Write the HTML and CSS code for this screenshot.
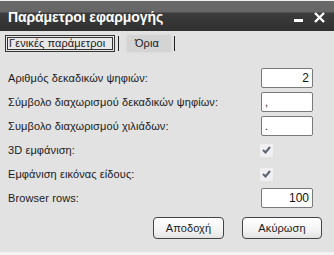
FILE: index.html
```html
<!DOCTYPE html>
<html lang="el">

<head>
	<meta charset="UTF-8">
	<title>Παράμετροι εφαρμογής</title>
	<link rel="stylesheet" href="styles.css">
</head>

<body>
	<div class="window">
		<div class="titlebar">
			<span class="title">Παράμετροι εφαρμογής</span>
			<span class="controls">
				<span class="min"></span>
				<svg class="close" width="11" height="11" viewBox="0 0 11 11">
					<path d="M1 1 L10 10 M10 1 L1 10" stroke="#fff" stroke-width="2.4" />
				</svg>
			</span>
		</div>

		<div class="tabs">
			<span class="tab active">Γενικές παράμετροι</span>
			<span class="sep"></span>
			<span class="tab">Όρια</span>
			<span class="sep"></span>
		</div>

		<form class="settings">
			<label>Αριθμός δεκαδικών ψηφιών:</label>
			<input type="text" class="num" value="2">

			<label>Σύμβολο διαχωρισμού δεκαδικών ψηφίων:</label>
			<input type="text" value=",">

			<label>Συμβολο διαχωρισμού χιλιάδων:</label>
			<input type="text" value=".">

			<label>3D εμφάνιση:</label>
			<span class="check">
				<svg width="9" height="8" viewBox="0 0 9 8"><path d="M1 4 L3.5 6.5 L8 1" stroke="#5b6270" stroke-width="2" fill="none" /></svg>
			</span>

			<label>Εμφάνιση εικόνας είδους:</label>
			<span class="check">
				<svg width="9" height="8" viewBox="0 0 9 8"><path d="M1 4 L3.5 6.5 L8 1" stroke="#5b6270" stroke-width="2" fill="none" /></svg>
			</span>

			<label>Browser rows:</label>
			<input type="text" class="num" value="100">
		</form>

		<div class="buttons">
			<button type="button" class="ok-btn">Αποδοχή</button>
			<button type="button" class="cancel-btn">Ακύρωση</button>
		</div>
	</div>
</body>

</html>
```

FILE: styles.css
```css
* {
	box-sizing: border-box;
}

body {
	margin: 0;
	font-family: 'Liberation Sans', Arial, sans-serif;
	background-color: #f4f4f4;
}

.window {
	width: 334px;
	height: 252px;
	background-color: #e2e2e2;
	display: flex;
	flex-direction: column;
}

.titlebar {
	height: 31px;
	border-top: 1px solid #f0f0f0;
	background: linear-gradient(to bottom, #6a6a6a 0, #666 11px, #3c3c3c 12px, #303030 100%);
	display: flex;
	align-items: center;
	justify-content: space-between;
	padding: 2px 9px 0 8px;
}

.title {
	color: #fff;
	font-weight: bold;
	font-size: 14px;
	letter-spacing: -0.1px;
}

.controls {
	display: flex;
	align-items: center;
	gap: 11px;
}

.min {
	width: 9px;
	height: 3px;
	background-color: #fff;
	margin-top: 7px;
}

.tabs {
	display: flex;
	align-items: center;
	padding: 3px 0 0 5px;
	height: 21px;
}

.tab {
	font-size: 11px;
	letter-spacing: 0.1px;
	color: #1a1a1a;
	height: 17px;
	white-space: nowrap;
}

.tab.active {
	border: 3px double #333;
	background-color: #e8e8e8;
	line-height: 11px;
	padding: 0 1px;
	width: 110px;
}

.tab:not(.active) {
	background-color: #d4d4d4;
	margin-left: 8px;
	line-height: 17px;
	padding: 0 12px 0 8px;
	box-shadow: 0 0 3px #d4d4d4;
}

.sep {
	width: 1px;
	height: 15px;
	background-color: #222;
	margin-left: 3px;
}

.settings {
	display: grid;
	grid-template-columns: 1fr 52px;
	grid-auto-rows: 24px;
	align-items: center;
	padding: 0 21px 0 8px;
	margin: 14px 0 0;
}

.settings label {
	font-size: 11px;
	letter-spacing: 0.1px;
	color: #1a1a1a;
}

.settings input[type="text"] {
	width: 52px;
	height: 20px;
	border: 1px solid #7a7a7a;
	border-radius: 2px;
	background-color: #fff;
	font-family: 'Liberation Sans', Arial, sans-serif;
	font-size: 11px;
	padding: 0 3px;
	color: #111;
}

.settings input.num {
	text-align: right;
	font-size: 12px;
}

.check {
	width: 13px;
	height: 13px;
	background-color: #f0f0f2;
	display: flex;
	align-items: center;
	justify-content: center;
	margin-left: -1px;
}

.buttons {
	display: flex;
	justify-content: flex-end;
	gap: 18px;
	padding-right: 12px;
	margin-top: 7px;
}

button {
	height: 22px;
	font-family: 'Liberation Sans', Arial, sans-serif;
	font-size: 11px;
	letter-spacing: 0.1px;
	color: #1a1a1a;
	border: 1px solid #444;
	border-radius: 4px;
	background: linear-gradient(to bottom, #ffffff 0, #f4f4f4 60%, #e2e2e2 100%);
	padding: 0;
}

.ok-btn {
	width: 71px;
}

.cancel-btn {
	width: 80px;
}
```
